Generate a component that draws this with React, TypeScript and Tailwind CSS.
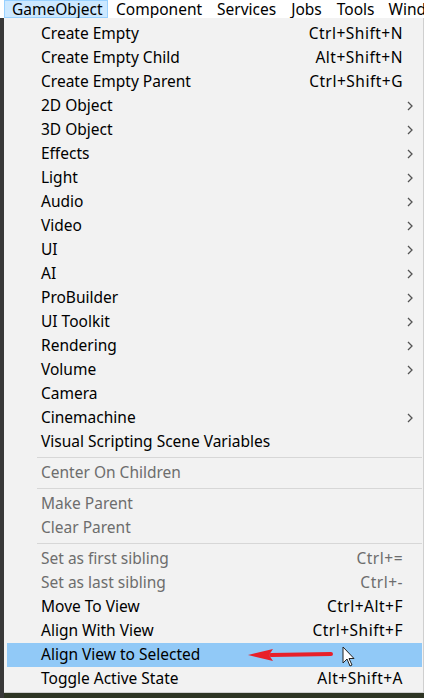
import React from "react";

type Item =
  | { sep: true }
  | { label: string; shortcut?: string; sub?: boolean; disabled?: boolean; hl?: boolean; sep?: false };

const items: Item[] = [
  { label: "Create Empty", shortcut: "Ctrl+Shift+N" },
  { label: "Create Empty Child", shortcut: "Alt+Shift+N" },
  { label: "Create Empty Parent", shortcut: "Ctrl+Shift+G" },
  { label: "2D Object", sub: true },
  { label: "3D Object", sub: true },
  { label: "Effects", sub: true },
  { label: "Light", sub: true },
  { label: "Audio", sub: true },
  { label: "Video", sub: true },
  { label: "UI", sub: true },
  { label: "AI", sub: true },
  { label: "ProBuilder", sub: true },
  { label: "UI Toolkit", sub: true },
  { label: "Rendering", sub: true },
  { label: "Volume", sub: true },
  { label: "Camera" },
  { label: "Cinemachine", sub: true },
  { label: "Visual Scripting Scene Variables" },
  { sep: true },
  { label: "Center On Children", disabled: true },
  { sep: true },
  { label: "Make Parent", disabled: true },
  { label: "Clear Parent", disabled: true },
  { sep: true },
  { label: "Set as first sibling", shortcut: "Ctrl+=", disabled: true },
  { label: "Set as last sibling", shortcut: "Ctrl+-", disabled: true },
  { label: "Move To View", shortcut: "Ctrl+Alt+F" },
  { label: "Align With View", shortcut: "Ctrl+Shift+F" },
  { label: "Align View to Selected", hl: true },
  { label: "Toggle Active State", shortcut: "Alt+Shift+A" },
];

function Chevron() {
  return (
    <svg width="6" height="10" viewBox="0 0 6 10" className="shrink-0">
      <path d="M1 1 L5 5 L1 9" fill="none" stroke="#555" strokeWidth="1.3" />
    </svg>
  );
}

export default function App() {
  return (
    <div
      className="w-[424px] h-[698px] overflow-hidden bg-[#2a2f22] flex flex-col relative"
      style={{ fontFamily: '"Noto Sans", "Segoe UI", sans-serif' }}
    >
      {/* menu bar */}
      <div className="h-[18px] bg-white flex items-center text-[15.5px] leading-[17px] text-black shrink-0 whitespace-nowrap">
        <div className="w-[4px] shrink-0" />
        <div className="pl-[7px] bg-[#cce8ff] border border-[#99d1ff] h-[18px] flex items-center w-[104px] shrink-0">GameObject</div>
        <div className="ml-[8px] shrink-0">Component</div>
        <div className="ml-[15px] shrink-0">Services</div>
        <div className="ml-[15px] shrink-0">Jobs</div>
        <div className="ml-[15px] shrink-0">Tools</div>
        <div className="ml-[14px] shrink-0">Window</div>
      </div>
      <div className="flex flex-1 min-h-0">
        <div className="w-[4px] bg-[#383838] shrink-0" />
        <div className="flex-1 flex flex-col">
          <div className="bg-[#f2f2f2] border-r border-b border-[#cfcfcf] pt-[4px] pb-[2px] pl-[3px] pr-[1px] h-[675px]">
            {items.map((it, i) =>
              it.sep ? (
                <div key={i} className="h-[7px] flex items-center pl-[30px]">
                  <div className="h-px flex-1 bg-[#d7d7d7]" />
                </div>
              ) : (
                <div
                  key={i}
                  className={
                    "h-[24px] flex items-center text-[15.5px] whitespace-nowrap relative " +
                    (it.hl ? "bg-[#91c9f7] " : "") +
                    (it.disabled ? "text-[#6d6d6d]" : "text-black")
                  }
                >
                  <div className="pl-[34px] flex-1">{it.label}</div>
                  {it.shortcut && <div className="pr-[19px] tracking-[0.5px]">{it.shortcut}</div>}
                  {it.sub && (
                    <div className="pr-[9px]">
                      <Chevron />
                    </div>
                  )}
                  {it.hl && (
                    <>
                      <svg
                        className="absolute left-[240px] top-[5px]"
                        width="90"
                        height="14"
                        viewBox="0 0 90 14"
                      >
                        <path d="M24 7 L84 6" stroke="#e8202a" strokeWidth="4" strokeLinecap="round" />
                        <path d="M1 7 L26 1 L22 7 L26 13 Z" fill="#e8202a" />
                      </svg>
                      <svg
                        className="absolute left-[335px] top-[3px]"
                        width="14"
                        height="22"
                        viewBox="0 0 14 22"
                      >
                        <path
                          d="M1 1 L1 17 L5 13 L8 20 L10 19 L7 12.5 L12 12.5 Z"
                          fill="#ffffff"
                          stroke="#222"
                          strokeWidth="1"
                          strokeLinejoin="round"
                        />
                      </svg>
                    </>
                  )}
                </div>
              )
            )}
          </div>
          <div className="flex-1 bg-[#2e3524]" />
        </div>
      </div>
    </div>
  );
}
